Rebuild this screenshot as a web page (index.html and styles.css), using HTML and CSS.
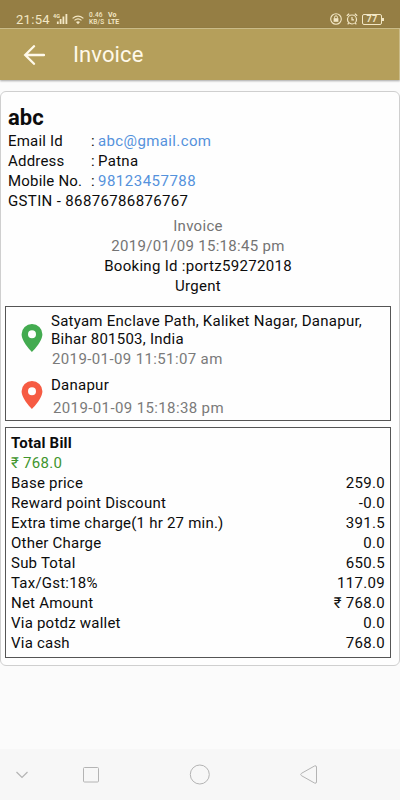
FILE: index.html
```html
<!DOCTYPE html>
<html lang="en">
<head>
<meta charset="utf-8">
<title>Invoice</title>
<link rel="stylesheet" href="styles.css">
</head>
<body>
<div class="status">
  <span class="clock">21:54</span>
  <svg class="signal" width="15" height="12" viewBox="0 0 15 12"><text x="0" y="4.500" class="tiny">4G</text><path d="M4.8 8.500v2.500M7.600 6v5M10.400 3.500v7.500M13.400 1v10" stroke="currentColor" stroke-width="1.800"/></svg>
  <svg class="wifi" width="12" height="10" viewBox="0 0 12 10" fill="none" stroke="currentColor" stroke-width="1.2"><path d="M.6 3.4Q6-1.2 11.4 3.4M2.5 5.4Q6 2.4 9.5 5.4"/><path d="M4 7.1Q6 5.4 8 7.1L6 9.2z" fill="currentColor" stroke="none"/></svg>
  <span class="pair speed"><span>0.46</span><span>KB/S</span></span>
  <span class="pair volte"><span>Vo</span><span>LTE</span></span>
  <span class="right">
    <svg width="12" height="12" viewBox="0 0 12 12" fill="none" stroke="currentColor"><circle cx="6" cy="6" r="5.3" stroke-width="1.1"/><rect x="3.6" y="5.2" width="4.8" height="3.6" fill="currentColor" stroke="none"/><path d="M4.6 5.5V4.2a1.4 1.4 0 0 1 2.8 0v1.3"/></svg>
    <svg width="12" height="12" viewBox="0 0 12 12" fill="none" stroke="currentColor" stroke-width="1.2"><circle cx="6" cy="6.5" r="4.5"/><path d="M.8 2.8 3.2.8M11.2 2.8 8.8.8M6 4v2.8h2M2.7 10l-1 1.4M9.3 10l1 1.4"/></svg>
    <span class="battery">77</span>
  </span>
</div>
<header class="bar">
  <svg class="back" width="22" height="20" viewBox="0 0 22 20" fill="none" stroke="currentColor" stroke-width="2.3" stroke-linecap="round"><path d="M21 10H2.500M11 1.200 2.200 10l8.800 8.800"/></svg>
  <h1>Invoice</h1>
</header>
<main class="card">
  <section class="customer">
    <h2>abc</h2>
    <div class="field"><span>Email Id</span><span class="colon">:</span><span class="link">abc@gmail.com</span></div>
    <div class="field"><span>Address</span><span class="colon">:</span><span>Patna</span></div>
    <div class="field"><span>Mobile No.</span><span class="colon">:</span><span class="link phone">98123457788</span></div>
    <div class="gst">GSTIN - 86876786876767</div>
  </section>
  <section class="booking">
    <div class="muted">Invoice</div>
    <div class="muted">2019/01/09 15:18:45 pm</div>
    <div>Booking Id :portz59272018</div>
    <div>Urgent</div>
  </section>
  <section class="box route">
    <div class="stop pickup">
      <svg class="pin" width="22" height="28" viewBox="0 0 22 28"><path fill-rule="evenodd" d="M11 0A10.4 10.2 0 0 0 .6 10.2C.6 17.8 11 28 11 28s10.4-10.2 10.4-17.8A10.4 10.2 0 0 0 11 0zm0 6.2a4 4 0 1 1 0 8 4 4 0 0 1 0-8z"/></svg>
      <div><div class="place">Satyam Enclave Path, Kaliket Nagar, Danapur,<br>Bihar 801503, India</div><div class="time">2019-01-09 11:51:07 am</div></div>
    </div>
    <div class="stop drop">
      <svg class="pin" width="22" height="28" viewBox="0 0 22 28"><path fill-rule="evenodd" d="M11 0A10.4 10.2 0 0 0 .6 10.2C.6 17.8 11 28 11 28s10.4-10.2 10.4-17.8A10.4 10.2 0 0 0 11 0zm0 6.2a4 4 0 1 1 0 8 4 4 0 0 1 0-8z"/></svg>
      <div><div class="place">Danapur</div><div class="time">2019-01-09 15:18:38 pm</div></div>
    </div>
  </section>
  <section class="box bill">
    <div class="title">Total Bill</div>
    <div class="total">₹ 768.0</div>
    <div class="row"><span>Base price</span><span class="amount">259.0</span></div>
    <div class="row"><span>Reward point Discount</span><span class="amount">-0.0</span></div>
    <div class="row"><span>Extra time charge(1 hr 27 min.)</span><span class="amount">391.5</span></div>
    <div class="row"><span>Other Charge</span><span class="amount">0.0</span></div>
    <div class="row"><span>Sub Total</span><span class="amount">650.5</span></div>
    <div class="row"><span>Tax/Gst:18%</span><span class="amount">117.09</span></div>
    <div class="row"><span>Net Amount</span><span class="amount">₹ 768.0</span></div>
    <div class="row"><span>Via potdz wallet</span><span class="amount">0.0</span></div>
    <div class="row"><span>Via cash</span><span class="amount">768.0</span></div>
  </section>
</main>
<nav class="nav">
  <svg width="400" height="51" viewBox="0 0 400 51" fill="none" stroke="#b4b4b4"><path d="m16.500 23 5.500 5.500 5.500-5.500" stroke-width="1.200"/><rect x="83.500" y="18.500" width="15" height="14.500" rx="1"/><circle cx="199.800" cy="25.500" r="9.500"/><path d="M301.500 24.300 314.500 17q2-.8 2 1v15q0 1.800-2 1L301.500 26.700q-1.600-1.200 0-2.400z"/></svg>
</nav>
</body>
</html>
```
FILE: styles.css
```css
* { box-sizing: border-box; }
body {
  margin: 0;
  height: 800px;
  display: flex;
  flex-direction: column;
  overflow: hidden;
  background: #fbfbfb;
  color: #0c0c0c;
  font: 15px/20px Roboto, sans-serif;
  letter-spacing: .3px;
}
h1, h2 { margin: 0; }
.status {
  height: 28px;
  padding: 11px 18px 0 16px;
  display: flex;
  background: #957e44;
  color: #f3e7c5;
}
.clock { width: 37px; font-size: 13px; line-height: 17px; }
.signal { margin-top: 2px; }
.tiny { font: bold 5.500px Roboto, sans-serif; fill: currentColor; letter-spacing: 0; }
.wifi { margin: 4px 0 0 4px; }
.pair {
  display: flex;
  flex-direction: column;
  margin-top: 1px;
  font-size: 6.500px;
  font-weight: 500;
  line-height: 7px;
  letter-spacing: 0;
}
.speed { margin-left: 5px; width: 19px; letter-spacing: .2px; }
.volte { font-weight: bold; font-size: 7px; }
.right { margin: 2px 0 0 auto; display: flex; gap: 4px; }
.battery {
  position: relative;
  width: 20px;
  height: 11px;
  margin-top: 1px;
  border: 1px solid;
  border-radius: 2px;
  font: bold 9px/9px Roboto, sans-serif;
  text-align: center;
}
.battery::after {
  content: "";
  position: absolute;
  right: -3px;
  top: 3px;
  width: 2px;
  height: 3px;
  background: currentColor;
}
.bar {
  height: 52px;
  display: flex;
  align-items: center;
  padding-left: 23px;
  background: #b59f5b;
  border-top: 1px solid #cabb88;
  border-right: 1px solid #cabb88;
  box-shadow: 0 1px 2px rgba(0, 0, 0, .35);
  color: #fff9ea;
}
.bar h1 { margin: 1px 0 0 28px; font-size: 22px; font-weight: 400; line-height: 28px; letter-spacing: .1px; }
.back { margin-top: 0; }
.card {
  height: 575px;
  margin: 11px 0 0;
  padding: 12px 8px 0 4px;
  background: #fefefe;
  border: 1px solid #cfcfcf;
  border-radius: 6px;
}
.customer { padding-left: 3px; }
.customer h2 { height: 27px; font-size: 22px; line-height: 27px; letter-spacing: .1px; }
.field { display: grid; grid-template-columns: 83px 7px auto; }
.field > :first-child { letter-spacing: .2px; }
.link { color: #5592dc; letter-spacing: .38px; }
.phone { letter-spacing: .5px; }
.gst { letter-spacing: .36px; }
.booking { margin-top: 5px; text-align: center; }
.muted { color: #747474; }
.box { border: 1px solid #555; }
.route { height: 115px; margin-top: 10px; padding: 5px 0 0 15px; }
.stop { display: flex; gap: 8px; }
.place { line-height: 18px; letter-spacing: .25px; }
.time { margin-top: 1px; padding-left: 1px; color: #7a7a7a; letter-spacing: .38px; }
.pin { margin-top: 12px; }
.pickup { height: 64px; fill: #43ab50; }
.drop .pin { margin-top: 5px; fill: #f65b43; }
.drop .time { margin-top: 4px; padding-left: 2px; }
.bill { height: 231px; margin-top: 6px; padding: 5px 5px 0; letter-spacing: .22px; }
.title { font-weight: 700; }
.total { color: #41952d; letter-spacing: .3px; }
.row { display: flex; justify-content: space-between; }
.amount { letter-spacing: .3px; }
.nav { height: 51px; margin-top: auto; background: #f7f7f7; }
.nav svg { display: block; }
```
